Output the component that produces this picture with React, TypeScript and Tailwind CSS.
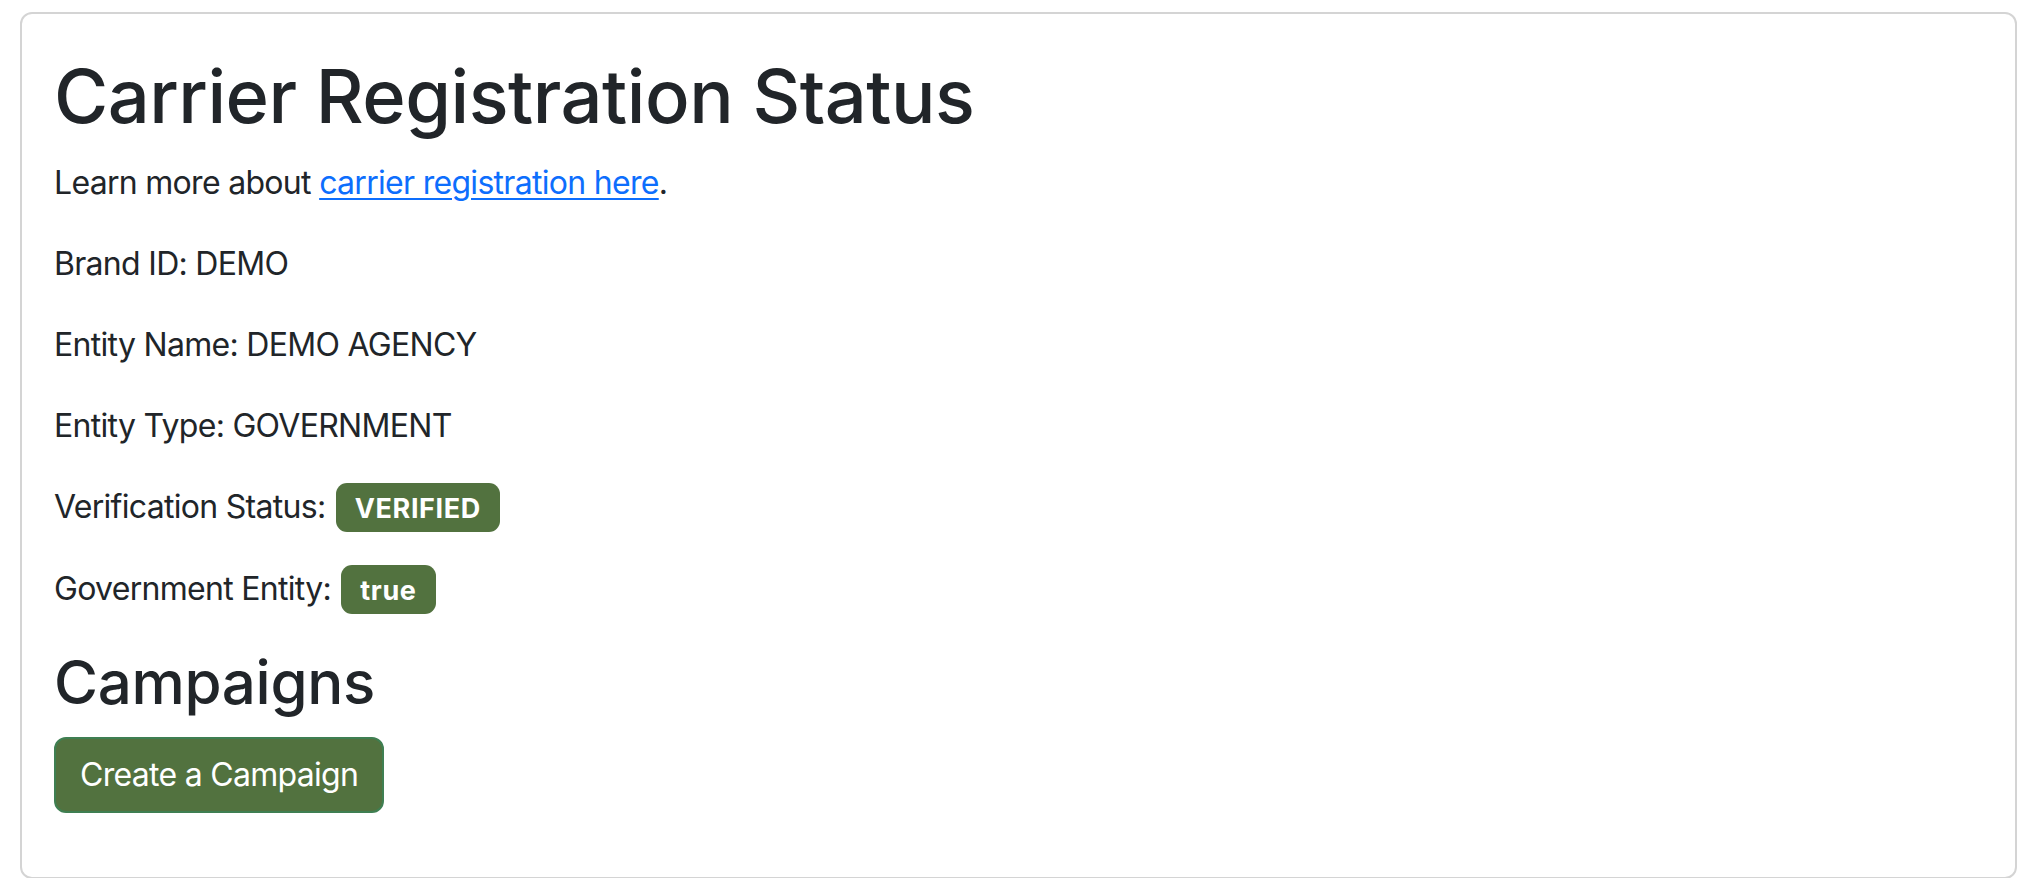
import React from "react";

function Badge({ children }: { children: React.ReactNode }) {
  return (
    <span className="ml-[2px] inline-block rounded-[11px] bg-[#52723f] px-[19px] pt-[12px] pb-[10px] text-[27px] font-bold leading-[27px] tracking-[0.6px] text-white">
      {children}
    </span>
  );
}

export default function App() {
  return (
    <div
      className="min-h-screen bg-white pt-[12px] pl-[20px] pr-[27px] text-[#212529]"
      style={{ fontFamily: "Inter, 'Noto Sans', 'Liberation Sans', sans-serif" }}
    >
      <div className="rounded-[12px] border-2 border-[#d4d4d4] px-[32px] pt-[38px] pb-[64px]">
        <h1 className="mb-[18px] text-[74px] font-medium leading-[1.2] tracking-[-0.5px]">
          Carrier Registration Status
        </h1>
        <div className="text-[32px] leading-[48px] tracking-[-0.7px]">
          <p className="mb-[33px]">
            Learn more about{" "}
            <a href="#" className="text-[#0d6efd] underline decoration-[2px] underline-offset-[4px]">
              carrier registration here
            </a>
            .
          </p>
          <p className="mb-[33px]">Brand ID: DEMO</p>
          <p className="mb-[33px]">Entity Name: DEMO AGENCY</p>
          <p className="mb-[33px]">Entity Type: GOVERNMENT</p>
          <p className="mb-[33px]">
            Verification Status: <Badge>VERIFIED</Badge>
          </p>
          <p className="mb-[32px]">
            Government Entity: <Badge>true</Badge>
          </p>
        </div>
        <h2 className="mb-[19px] text-[60px] font-medium leading-[1.2] tracking-[-0.3px]">Campaigns</h2>
        <button
          type="button"
          className="rounded-[12px] border-2 border-[#3f7f52] bg-[#52723f] px-[24px] py-[12px] text-[32px] leading-[48px] tracking-[-0.7px] text-white"
        >
          Create a Campaign
        </button>
      </div>
    </div>
  );
}
